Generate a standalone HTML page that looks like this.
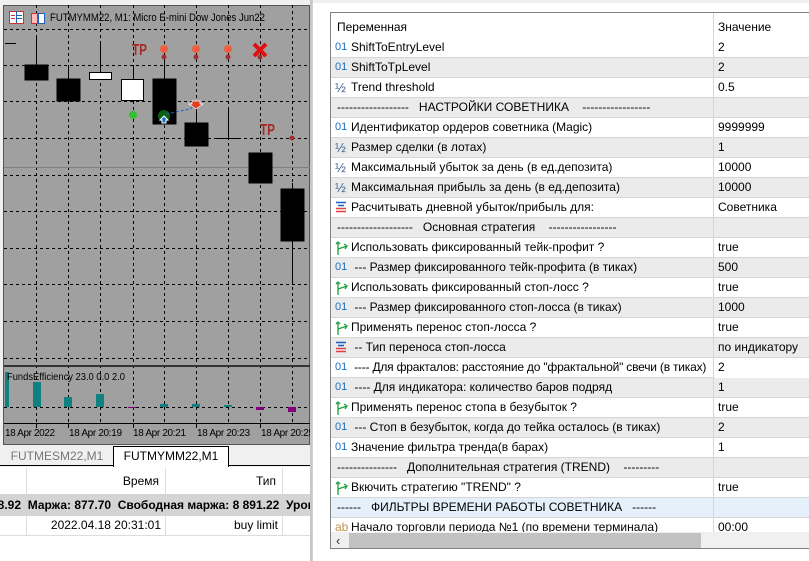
<!DOCTYPE html>
<html><head><meta charset="utf-8"><style>
*{margin:0;padding:0;box-sizing:border-box}
body{width:809px;height:561px;overflow:hidden;background:#fff;font-family:"Liberation Sans",sans-serif;font-size:12px;position:relative}
#left{position:absolute;left:0;top:0;width:312px;height:561px;background:#f0f0f0}
#right{position:absolute;left:312px;top:0;width:497px;height:561px;background:#fff;border-left:1px solid #d0d0d0}
.tbl{position:absolute;left:17px;top:12px;width:490px;height:537px;border:1px solid #828282;overflow:hidden;background:#fff}
.row{position:absolute;left:0;width:490px;height:20px;border-bottom:1px solid #d6d6d6;white-space:nowrap;line-height:19px}
.g{background:#ebebeb}.b{background:#e5f0fb}
.n{position:absolute;left:20px;top:0}
.v{position:absolute;left:382px;top:0;height:20px;border-left:1px solid #d6d6d6;padding-left:4px;width:120px}
.ic{position:absolute;left:4px;top:0;font-size:11px;color:#1f6fb8}
.h{position:absolute;left:4px;top:0;font-size:13px;color:#3a5f8a}
.ab{position:absolute;left:4px;top:0;font-size:12px;color:#c09050}
.sep{position:absolute;left:6px;top:0}
svg.bi{position:absolute;left:4px;top:3px}
</style></head><body>
<div id="left">
<svg width="312" height="470" style="position:absolute;left:0;top:0">
<rect x="0" y="0" width="312" height="470" fill="#f0f0f0"/>
<rect x="3.5" y="5.5" width="306" height="439" fill="#a0a0a0" stroke="#555" stroke-width="1"/>
<g stroke="#000" stroke-dasharray="3,3" stroke-width="1">
<line x1="4" y1="29.5" x2="310" y2="29.5"/><line x1="4" y1="65.5" x2="310" y2="65.5"/><line x1="4" y1="101.5" x2="310" y2="101.5"/><line x1="4" y1="138.5" x2="310" y2="138.5"/><line x1="4" y1="175.5" x2="310" y2="175.5"/><line x1="4" y1="211.5" x2="310" y2="211.5"/><line x1="4" y1="248.5" x2="310" y2="248.5"/><line x1="4" y1="284.5" x2="310" y2="284.5"/><line x1="4" y1="321.5" x2="310" y2="321.5"/><line x1="4" y1="358.5" x2="310" y2="358.5"/>
<line x1="4" y1="407.5" x2="310" y2="407.5"/>
<line x1="36.5" y1="5" x2="36.5" y2="423"/><line x1="68.5" y1="5" x2="68.5" y2="423"/><line x1="100.5" y1="5" x2="100.5" y2="423"/><line x1="133.5" y1="5" x2="133.5" y2="423"/><line x1="164.5" y1="5" x2="164.5" y2="423"/><line x1="196.5" y1="5" x2="196.5" y2="423"/><line x1="228.5" y1="5" x2="228.5" y2="423"/><line x1="260.5" y1="5" x2="260.5" y2="423"/><line x1="292.5" y1="5" x2="292.5" y2="423"/>
</g>
<line x1="4" y1="167.5" x2="310" y2="167.5" stroke="#7a8088"/>
<rect x="4" y="365" width="306" height="2" fill="#333"/>
<line x1="4" y1="423.5" x2="310" y2="423.5" stroke="#000"/>
<g fill="#000" stroke="#000">
<line x1="5" y1="43.5" x2="16" y2="43.5"/>
<line x1="36.5" y1="35" x2="36.5" y2="80"/><rect x="25" y="65" width="23" height="15"/>
<line x1="68.5" y1="65" x2="68.5" y2="101"/><rect x="57" y="79" width="23" height="22"/>
<line x1="100.5" y1="42" x2="100.5" y2="79"/><rect x="89.5" y="72.5" width="22" height="7" fill="#fff"/>
<line x1="133.5" y1="65" x2="133.5" y2="101"/><rect x="121.5" y="79.5" width="22" height="21" fill="#fff"/>
<line x1="164.5" y1="50" x2="164.5" y2="124"/><rect x="153" y="79" width="23" height="45"/>
<line x1="196.5" y1="103" x2="196.5" y2="146"/><rect x="185" y="123" width="23" height="23"/>
<line x1="228.5" y1="110" x2="228.5" y2="138"/><line x1="214" y1="138.5" x2="240" y2="138.5"/>
<rect x="249" y="153" width="23" height="30"/>
<line x1="292.5" y1="183" x2="292.5" y2="284"/><rect x="281" y="189" width="23" height="52"/>
</g>
<text x="132" y="55" font-size="16" font-weight="bold" fill="#a32a2a" textLength="15" lengthAdjust="spacingAndGlyphs">TP</text>
<text x="260" y="135" font-size="16" font-weight="bold" fill="#a32a2a" textLength="15" lengthAdjust="spacingAndGlyphs">TP</text>
<g fill="#f06040"><circle cx="164" cy="49" r="4"/><circle cx="196" cy="49" r="4"/><circle cx="228" cy="49" r="4"/></g>
<g fill="#a03030"><circle cx="164" cy="57" r="2.5"/><circle cx="196" cy="57" r="2.5"/><circle cx="228" cy="57" r="2.5"/><circle cx="260" cy="57" r="2.5"/><circle cx="292" cy="138" r="2.5"/></g>
<path d="M254 44 L266 56 M266 44 L254 56" stroke="#e01010" stroke-width="4"/>
<circle cx="133" cy="115" r="4" fill="#30c030"/>
<circle cx="164" cy="116" r="6" fill="#0a6010"/>
<path d="M160 120 L164 116 L168 120 L166 120 L166 123 L162 123 L162 120Z" fill="#1a70c0" stroke="#fff"/>
<path d="M166 114 L190 109 L196 104" stroke="#1a60c0" stroke-dasharray="3,2" fill="none"/>
<path d="M192 101 L200 101 L200 104 L203 104 L196 109 L189 104 L192 104Z" fill="#e04020" stroke="#fff" stroke-width="0.7"/>
<g fill="#108080"><rect x="5" y="372" width="4" height="35"/><rect x="33" y="382" width="8" height="25"/><rect x="64" y="397" width="8" height="10"/><rect x="96" y="394" width="8" height="13"/><rect x="160" y="404" width="8" height="3"/><rect x="192" y="404" width="8" height="3"/><rect x="224" y="405" width="8" height="2"/></g>
<g fill="#800080"><rect x="256" y="407" width="8" height="3"/><rect x="288" y="407" width="8" height="5"/><rect x="128" y="407" width="8" height="1"/></g>
<text x="7" y="380" font-size="10" fill="#000" textLength="118" lengthAdjust="spacingAndGlyphs">FundsEfficiency 23.0 0.0 2.0</text>
<g stroke="#000"><line x1="36.5" y1="423" x2="36.5" y2="428"/><line x1="68.5" y1="423" x2="68.5" y2="428"/><line x1="133.5" y1="423" x2="133.5" y2="428"/><line x1="196.5" y1="423" x2="196.5" y2="428"/><line x1="260.5" y1="423" x2="260.5" y2="428"/></g>
<g font-size="10" fill="#000"><text x="5" y="436" textLength="50">18 Apr 2022</text><text x="69" y="436" textLength="53">18 Apr 20:19</text><text x="133" y="436" textLength="53">18 Apr 20:21</text><text x="197" y="436" textLength="53">18 Apr 20:23</text><text x="261" y="436" textLength="53">18 Apr 20:25</text></g>
<rect x="9.5" y="11.5" width="14" height="12" fill="#fff" stroke="#d03030"/><line x1="16.5" y1="11" x2="16.5" y2="23" stroke="#1a60c0"/>
<g stroke="#d03030"><line x1="11" y1="15.5" x2="15" y2="15.5"/><line x1="11" y1="18.5" x2="15" y2="18.5"/></g><g stroke="#1a60c0"><line x1="17" y1="15.5" x2="22" y2="15.5"/><line x1="17" y1="18.5" x2="22" y2="18.5"/></g>
<rect x="31.5" y="13.5" width="6" height="10" fill="#fbb" stroke="#d03030"/><rect x="38.5" y="13.5" width="6" height="10" fill="#fff" stroke="#1a60c0"/>
<text x="50" y="21" font-size="11" fill="#000" textLength="215" lengthAdjust="spacingAndGlyphs">FUTMYMM22, M1:  Micro E-mini Dow Jones Jun22</text>
</svg>
<div style="position:absolute;left:0;top:445px;width:312px;height:21px;background:#f0f0f0;border-bottom:1px solid #000"></div>
<div style="position:absolute;left:2px;top:447px;width:110px;height:18px;color:#777;font-size:12px;text-align:center;line-height:18px">FUTMESM22,M1</div>
<div style="position:absolute;left:113px;top:446px;width:116px;height:21px;background:#fff;border:1px solid #000;border-bottom:none;font-size:12px;text-align:center;line-height:19px">FUTMYMM22,M1</div>
<div style="position:absolute;left:0;top:467px;width:312px;height:94px;background:#fff"></div>
<div style="position:absolute;left:0;top:474px;width:159px;text-align:right;font-size:12px">Время</div>
<div style="position:absolute;left:0;top:474px;width:276px;text-align:right;font-size:12px">Тип</div>
<div style="position:absolute;left:26px;top:468px;width:1px;height:26px;background:#ddd"></div>
<div style="position:absolute;left:165px;top:468px;width:1px;height:26px;background:#ddd"></div>
<div style="position:absolute;left:282px;top:468px;width:1px;height:26px;background:#ddd"></div>
<div style="position:absolute;left:0;top:494px;width:312px;height:22px;background:#d4d4d4;font-weight:bold;font-size:12px;line-height:22px;white-space:nowrap;overflow:hidden"><span style="position:absolute;left:-9px">68.92&nbsp; Маржа: 877.70&nbsp; Свободная маржа: 8 891.22&nbsp; Уров</span></div>
<div style="position:absolute;left:0;top:516px;width:312px;height:20px;border-bottom:1px solid #ddd"></div>
<div style="position:absolute;left:0;top:518px;width:161px;text-align:right;font-size:12px">2022.04.18 20:31:01</div>
<div style="position:absolute;left:0;top:518px;width:278px;text-align:right;font-size:12px">buy limit</div>
<div style="position:absolute;left:26px;top:516px;width:1px;height:20px;background:#ddd"></div>
<div style="position:absolute;left:165px;top:516px;width:1px;height:20px;background:#ddd"></div>
<div style="position:absolute;left:282px;top:516px;width:1px;height:20px;background:#ddd"></div>
<div style="position:absolute;left:310px;top:0;width:2px;height:561px;background:#c8c8c8"></div>
</div>
<div id="right">
<div style="position:absolute;left:0;top:0;width:497px;height:3px;background:#f0f0f0"></div>
<div class="tbl">
<div class="row" style="top:0;height:25px;border-bottom:none"><span class="n" style="left:6px;top:5px">Переменная</span><span class="v" style="height:25px;padding-top:5px">Значение</span></div>
<div class="row" style="top:25px"><span class="ic">01</span><span class="n">ShiftToEntryLevel</span><span class="v">2</span></div>
<div class="row g" style="top:45px"><span class="ic">01</span><span class="n">ShiftToTpLevel</span><span class="v">2</span></div>
<div class="row" style="top:65px"><span class="h">½</span><span class="n">Trend threshold</span><span class="v">0.5</span></div>
<div class="row g" style="top:85px"><span class="sep">------------------ &nbsp;&nbsp;НАСТРОЙКИ СОВЕТНИКА &nbsp;&nbsp;&nbsp;-----------------</span><span class="v"></span></div>
<div class="row" style="top:105px"><span class="ic">01</span><span class="n">Идентификатор ордеров советника (Magic)</span><span class="v">9999999</span></div>
<div class="row g" style="top:125px"><span class="h">½</span><span class="n">Размер сделки (в лотах)</span><span class="v">1</span></div>
<div class="row" style="top:145px"><span class="h">½</span><span class="n">Максимальный убыток за день (в ед.депозита)</span><span class="v">10000</span></div>
<div class="row g" style="top:165px"><span class="h">½</span><span class="n">Максимальная прибыль за день (в ед.депозита)</span><span class="v">10000</span></div>
<div class="row" style="top:185px"><svg class="bi" width="12" height="12"><path d="M1 1.5H11M3 4.5H9" stroke="#1a60c0" stroke-width="1.5"/><path d="M1 7.5H11M1 10.5H11" stroke="#e04040" stroke-width="1.5"/></svg><span class="n">Расчитывать дневной убыток/прибыль для:</span><span class="v">Советника</span></div>
<div class="row g" style="top:205px"><span class="sep">------------------- &nbsp;&nbsp;Основная стратегия &nbsp;&nbsp;&nbsp;-----------------</span><span class="v"></span></div>
<div class="row" style="top:225px"><svg class="bi" width="14" height="14"><path d="M3 14V1M1 3L3 1 5 3M3 8L12 5M9 3L12 5 10 8" stroke="#20a040" fill="none" stroke-width="1.3"/></svg><span class="n">Использовать фиксированный тейк-профит ?</span><span class="v">true</span></div>
<div class="row g" style="top:245px"><span class="ic">01</span><span class="n">&nbsp;--- Размер фиксированного тейк-профита (в тиках)</span><span class="v">500</span></div>
<div class="row" style="top:265px"><svg class="bi" width="14" height="14"><path d="M3 14V1M1 3L3 1 5 3M3 8L12 5M9 3L12 5 10 8" stroke="#20a040" fill="none" stroke-width="1.3"/></svg><span class="n">Использовать фиксированный стоп-лосс ?</span><span class="v">true</span></div>
<div class="row g" style="top:285px"><span class="ic">01</span><span class="n">&nbsp;--- Размер фиксированного стоп-лосса (в тиках)</span><span class="v">1000</span></div>
<div class="row" style="top:305px"><svg class="bi" width="14" height="14"><path d="M3 14V1M1 3L3 1 5 3M3 8L12 5M9 3L12 5 10 8" stroke="#20a040" fill="none" stroke-width="1.3"/></svg><span class="n">Применять перенос стоп-лосса ?</span><span class="v">true</span></div>
<div class="row g" style="top:325px"><svg class="bi" width="12" height="12"><path d="M1 1.5H11M3 4.5H9" stroke="#1a60c0" stroke-width="1.5"/><path d="M1 7.5H11M1 10.5H11" stroke="#e04040" stroke-width="1.5"/></svg><span class="n">&nbsp;-- Тип переноса стоп-лосса</span><span class="v">по индикатору</span></div>
<div class="row" style="top:345px"><span class="ic">01</span><span class="n" style="letter-spacing:-0.2px">&nbsp;---- Для фракталов: расстояние до "фрактальной" свечи (в тиках)</span><span class="v" style="background:#fff">2</span></div>
<div class="row g" style="top:365px"><span class="ic">01</span><span class="n">&nbsp;---- Для индикатора: количество баров подряд</span><span class="v">1</span></div>
<div class="row" style="top:385px"><svg class="bi" width="14" height="14"><path d="M3 14V1M1 3L3 1 5 3M3 8L12 5M9 3L12 5 10 8" stroke="#20a040" fill="none" stroke-width="1.3"/></svg><span class="n">Применять перенос стопа в безубыток ?</span><span class="v">true</span></div>
<div class="row g" style="top:405px"><span class="ic">01</span><span class="n">&nbsp;--- Стоп в безубыток, когда до тейка осталось (в тиках)</span><span class="v">2</span></div>
<div class="row" style="top:425px"><span class="ic">01</span><span class="n">Значение фильтра тренда(в барах)</span><span class="v">1</span></div>
<div class="row g" style="top:445px"><span class="sep">--------------- &nbsp;&nbsp;Дополнительная стратегия (TREND) &nbsp;&nbsp;&nbsp;---------</span><span class="v"></span></div>
<div class="row" style="top:465px"><svg class="bi" width="14" height="14"><path d="M3 14V1M1 3L3 1 5 3M3 8L12 5M9 3L12 5 10 8" stroke="#20a040" fill="none" stroke-width="1.3"/></svg><span class="n">Вкючить стратегию "TREND" ?</span><span class="v">true</span></div>
<div class="row b" style="top:485px"><span class="sep">------ &nbsp;&nbsp;ФИЛЬТРЫ ВРЕМЕНИ РАБОТЫ СОВЕТНИКА &nbsp;&nbsp;------</span><span class="v"></span></div>
<div class="row" style="top:505px"><span class="ab">ab</span><span class="n">Начало торговли периода №1 (по времени терминала)</span><span class="v">00:00</span></div>
<div style="position:absolute;left:0;top:519px;width:490px;height:17px;background:#f0f0f0"></div>
<div style="position:absolute;left:5px;top:520px;font-size:13px;color:#333">&lsaquo;</div>
<div style="position:absolute;left:18px;top:520px;width:352px;height:15px;background:#c2c2c2"></div>
</div>
</div>
</body></html>
